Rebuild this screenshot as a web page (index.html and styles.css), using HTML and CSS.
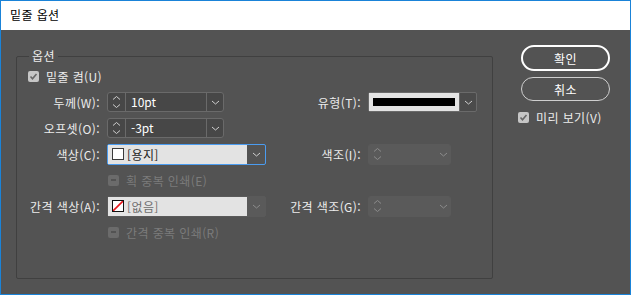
FILE: index.html
```html
<!DOCTYPE html>
<html lang="ko">
<head>
    <meta charset="UTF-8">
    <title>밑줄 옵션</title>
    <link rel="stylesheet" href="styles.css">
</head>
<body>
    <div class="window">
        <div class="titlebar">밑줄 옵션</div>
        <div class="dialog">
            <fieldset class="group">
                <legend>옵션</legend>
                <div class="form-grid">
                    <!-- row 1 -->
                    <label class="check span-all">
                        <span class="box on"><svg width="9" height="9" viewBox="0 0 9 9"><polyline points="1.5,4.5 3.5,6.8 7.5,2" fill="none" stroke="#676767" stroke-width="1.6"/></svg></span>
                        밑줄 켬(U)
                    </label>

                    <!-- row 2 -->
                    <span class="lbl">두께(W):</span>
                    <div class="spin">
                        <span class="arrows"><svg width="9" height="14" viewBox="0 0 9 14"><polyline points="1,4.5 4.5,1.5 8,4.5" fill="none" stroke="#cfcfcf"/><polyline points="1,9.5 4.5,12.5 8,9.5" fill="none" stroke="#cfcfcf"/></svg></span>
                        <span class="val">10pt</span>
                        <span class="drop"><svg width="9" height="5" viewBox="0 0 9 5"><polyline points="1,1 4.5,4 8,1" fill="none" stroke="#cfcfcf"/></svg></span>
                    </div>
                    <span class="lbl">유형(T):</span>
                    <div class="select stroke">
                        <span class="fill"><span class="line"></span></span>
                        <span class="drop"><svg width="9" height="5" viewBox="0 0 9 5"><polyline points="1,1 4.5,4 8,1" fill="none" stroke="#cfcfcf"/></svg></span>
                    </div>

                    <!-- row 3 -->
                    <span class="lbl">오프셋(O):</span>
                    <div class="spin">
                        <span class="arrows"><svg width="9" height="14" viewBox="0 0 9 14"><polyline points="1,4.5 4.5,1.5 8,4.5" fill="none" stroke="#cfcfcf"/><polyline points="1,9.5 4.5,12.5 8,9.5" fill="none" stroke="#cfcfcf"/></svg></span>
                        <span class="val">-3pt</span>
                        <span class="drop"><svg width="9" height="5" viewBox="0 0 9 5"><polyline points="1,1 4.5,4 8,1" fill="none" stroke="#cfcfcf"/></svg></span>
                    </div>
                    <span></span>
                    <span></span>

                    <!-- row 4 -->
                    <span class="lbl">색상(C):</span>
                    <div class="select color focused">
                        <span class="fill"><span class="swatch"></span>[용지]</span>
                        <span class="drop"><svg width="9" height="5" viewBox="0 0 9 5"><polyline points="1,1 4.5,4 8,1" fill="none" stroke="#cfcfcf"/></svg></span>
                    </div>
                    <span class="lbl">색조(I):</span>
                    <div class="spin off">
                        <span class="arrows"><svg width="9" height="14" viewBox="0 0 9 14"><polyline points="1,4.5 4.5,1.5 8,4.5" fill="none" stroke="#8c8c8c"/><polyline points="1,9.5 4.5,12.5 8,9.5" fill="none" stroke="#8c8c8c"/></svg></span>
                        <span class="val"></span>
                        <span class="drop"><svg width="9" height="5" viewBox="0 0 9 5"><polyline points="1,1 4.5,4 8,1" fill="none" stroke="#8c8c8c"/></svg></span>
                    </div>

                    <!-- row 5 -->
                    <span></span>
                    <label class="check off span-2">
                        <span class="box"><span class="dash"></span></span>
                        획 중복 인쇄(E)
                    </label>
                    <span></span>

                    <!-- row 6 -->
                    <span class="lbl">간격 색상(A):</span>
                    <div class="select color off">
                        <span class="fill"><span class="swatch none"><svg width="10" height="10" viewBox="0 0 10 10"><line x1="0" y1="10" x2="10" y2="0" stroke="#e8161b" stroke-width="1.6"/></svg></span>[없음]</span>
                        <span class="drop"><svg width="9" height="5" viewBox="0 0 9 5"><polyline points="1,1 4.5,4 8,1" fill="none" stroke="#8c8c8c"/></svg></span>
                    </div>
                    <span class="lbl">간격 색조(G):</span>
                    <div class="spin off">
                        <span class="arrows"><svg width="9" height="14" viewBox="0 0 9 14"><polyline points="1,4.5 4.5,1.5 8,4.5" fill="none" stroke="#8c8c8c"/><polyline points="1,9.5 4.5,12.5 8,9.5" fill="none" stroke="#8c8c8c"/></svg></span>
                        <span class="val"></span>
                        <span class="drop"><svg width="9" height="5" viewBox="0 0 9 5"><polyline points="1,1 4.5,4 8,1" fill="none" stroke="#8c8c8c"/></svg></span>
                    </div>

                    <!-- row 7 -->
                    <span></span>
                    <label class="check off span-2">
                        <span class="box"><span class="dash"></span></span>
                        간격 중복 인쇄(R)
                    </label>
                    <span></span>
                </div>
            </fieldset>

            <div class="buttons">
                <button class="btn primary">확인</button>
                <button class="btn">취소</button>
                <label class="check preview">
                    <span class="box on"><svg width="9" height="9" viewBox="0 0 9 9"><polyline points="1.5,4.5 3.5,6.8 7.5,2" fill="none" stroke="#676767" stroke-width="1.6"/></svg></span>
                    미리 보기(V)
                </label>
            </div>
        </div>
    </div>
</body>
</html>
```

FILE: styles.css
```css
/* Page */
body {
    margin: 0;
    font-family: "Noto Sans CJK KR", "Noto Sans", sans-serif;
    font-size: 12px;
    letter-spacing: 0.4px;
    background-color: #535353;
}

/* Window frame */
.window {
    width: 631px;
    height: 295px;
    box-sizing: border-box;
    border: 1px solid #1a83d8;
    display: flex;
    flex-direction: column;
}

.titlebar {
    height: 29px;
    line-height: 28px;
    padding-left: 9px;
    background-color: #fff;
    color: #000;
}

.dialog {
    flex: 1;
    display: flex;
    align-items: flex-start;
    background-color: #535353;
    color: #ececec;
    padding: 19px 0 0 15px;
}

/* Group box */
.group {
    width: 477px;
    height: 230px;
    box-sizing: border-box;
    margin: 0;
    padding: 0;
    border: 1px solid #404040;
    border-radius: 2px;
}

.group legend {
    margin-left: 12px;
    padding: 0 3px;
    line-height: 14px;
    color: #ececec;
}

.form-grid {
    display: grid;
    grid-template-columns: 79px 159px 102px 109px;
    grid-auto-rows: 26px;
    align-items: center;
    padding: 0 0 0 11px;
}

.span-all {
    grid-column: 1 / -1;
}

.span-2 {
    grid-column: 2 / 4;
}

.lbl {
    text-align: right;
    padding-right: 7px;
    white-space: nowrap;
}

/* Checkboxes */
.check {
    display: flex;
    align-items: center;
    gap: 7px;
    white-space: nowrap;
}

.check .box {
    width: 11px;
    height: 11px;
    border-radius: 2px;
    background-color: #6b6b6b;
    display: flex;
    justify-content: center;
    align-items: center;
}

.check .box.on {
    background-color: #c6c6c6;
}

.check .dash {
    width: 5px;
    height: 2px;
    background-color: #535353;
}

.check.off {
    color: #7b7b7b;
    margin-left: 1px;
}

/* Spin boxes */
.spin {
    width: 117px;
    height: 20px;
    box-sizing: border-box;
    display: flex;
    border: 1px solid #6a6a6a;
    border-radius: 3px;
    background-color: #474747;
}

.spin .arrows {
    width: 17px;
    border-right: 1px solid #6a6a6a;
    display: flex;
    justify-content: center;
    align-items: center;
}

.spin .val {
    flex: 1;
    padding-left: 5px;
    line-height: 18px;
    color: #fff;
    letter-spacing: 0;
}

.spin .drop,
.select .drop {
    width: 16px;
    border-left: 1px solid #6a6a6a;
    display: flex;
    justify-content: center;
    align-items: center;
}

.spin.off {
    width: 83px;
    height: 21px;
    border-color: #5a5a5a;
    background-color: #5a5a5a;
}

.spin.off .arrows,
.spin.off .drop {
    border-color: transparent;
}

.spin.off .drop {
    width: 14px;
}

/* Drop-down lists */
.select {
    height: 20px;
    box-sizing: border-box;
    display: flex;
    border: 1px solid #6a6a6a;
    border-radius: 2px;
    background-color: #4b4b4b;
}

.select .fill {
    flex: 1;
    display: flex;
    align-items: center;
    background-color: #e3e3e3;
    color: #1e1e1e;
}

.stroke .line {
    height: 8px;
    margin: 0 4px;
    flex: 1;
    background-color: #000;
}

.color {
    height: 21px;
}

.color .fill {
    padding-left: 4px;
    gap: 3px;
}

.swatch {
    width: 10px;
    height: 10px;
    border: 1px solid #3a3a3a;
    background-color: #fff;
    display: flex;
}

.swatch.none {
    border-color: #111;
}

.color.focused {
    border-color: #4b9cf0;
    background-color: #535353;
}

.color .drop {
    width: 17px;
}

.color.focused .drop {
    border-left-color: #535353;
}

.color.off {
    border-color: #5a5a5a;
    background-color: #5a5a5a;
}

.color.off .fill {
    color: #6e6e6e;
}

.color.off .drop {
    border-left-color: #5a5a5a;
}

/* Buttons */
.buttons {
    margin: -4px 0 0 28px;
    width: 89px;
    display: flex;
    flex-direction: column;
}

.btn {
    height: 24px;
    margin-bottom: 6px;
    background-color: transparent;
    color: #fff;
    border: 1px solid #cfcfcf;
    border-radius: 12px;
    font-family: inherit;
    font-size: 12px;
    letter-spacing: 0.4px;
    padding: 0;
}

.btn.primary {
    height: 26px;
    border: 2px solid #fff;
    border-radius: 13px;
}

.preview {
    margin: 2px 0 0 -3px;
}
```
